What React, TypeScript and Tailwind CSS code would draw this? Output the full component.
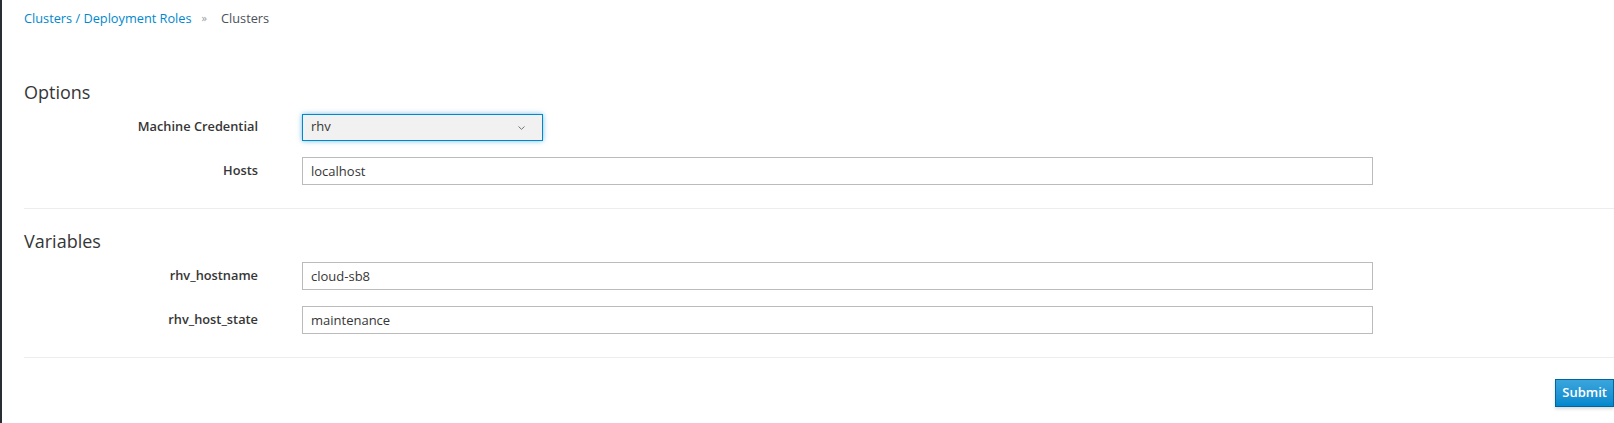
const font = { fontFamily: '"Open Sans", "Liberation Sans", sans-serif' };

interface FieldRowProps {
  label: string;
  value: string;
}

function FieldRow({ label, value }: FieldRowProps) {
  return (
    <div className="mb-4 flex h-7 items-center">
      <label className="w-[234px] shrink-0 text-right text-[12.8px] font-semibold text-[#363636]">
        {label}
      </label>
      <input
        readOnly
        value={value}
        className="ml-[44px] h-7 w-[1071px] border border-[#bbbbbb] bg-white px-2 text-[13px] text-[#363636] outline-none"
      />
    </div>
  );
}

function SectionTitle({ children }: { children: string }) {
  return <h2 className="mb-2 h-[26px] text-[18px] leading-[26px] text-[#363636]">{children}</h2>;
}

export default function App() {
  return (
    <div className="flex min-h-screen bg-white" style={font}>
      <div className="w-[2px] shrink-0 bg-[#292e34]" />
      <main className="flex-1 pl-[22px]">
        <nav className="flex h-[37px] items-center text-[12.75px]">
          <a className="text-[#0088ce]" href="#">
            Clusters / Deployment Roles
          </a>
          <span className="mx-[10px] text-[11px] text-[#9c9c9c]">»</span>
          <span className="ml-1 text-[#4d5258]">Clusters</span>
        </nav>

        <form className="mt-[42px]">
          <SectionTitle>Options</SectionTitle>
          <div className="mb-4 flex h-7 items-center">
            <label className="w-[234px] shrink-0 text-right text-[12.8px] font-semibold text-[#363636]">
              Machine Credential
            </label>
            <button
              type="button"
              className="ml-[44px] flex h-[27px] w-[241px] items-center justify-between border border-[#0088ce] bg-[#f1f1f1] pr-[17px] pl-2 text-[13px] text-[#363636] shadow-[0_0_5px_rgba(0,136,206,0.55)]"
            >
              <span>rhv</span>
              <svg width="7" height="4" viewBox="0 0 7 4" className="mt-[2px]" aria-hidden="true">
                <polyline points="0.5,0.5 3.5,3.3 6.5,0.5" fill="none" stroke="#72767b" strokeWidth="1" />
              </svg>
            </button>
          </div>
          <FieldRow label="Hosts" value="localhost" />

          <div className="mt-[23px] border-t border-[#ededed] pt-[19px]">
            <SectionTitle>Variables</SectionTitle>
            <FieldRow label="rhv_hostname" value="cloud-sb8" />
            <FieldRow label="rhv_host_state" value="maintenance" />
          </div>

          <div className="mt-[23px] flex justify-end border-t border-[#ededed] pt-[21px]">
            <button
              type="button"
              className="h-7 border border-[#00659c] bg-gradient-to-b from-[#39a5dc] to-[#0088ce] px-[6px] text-[13px] font-semibold text-white shadow-[0_2px_3px_rgba(3,3,3,0.15)]"
            >
              Submit
            </button>
          </div>
        </form>
      </main>
    </div>
  );
}
